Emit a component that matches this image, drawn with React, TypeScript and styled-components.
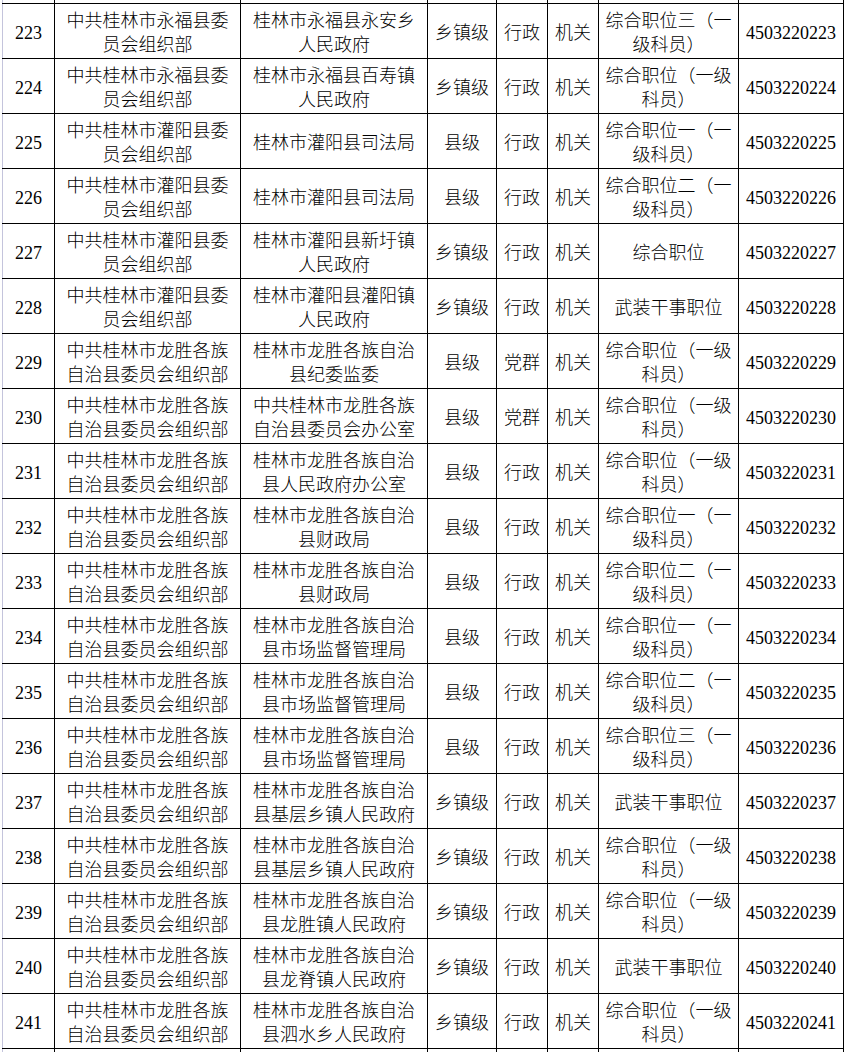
import styled, { createGlobalStyle } from "styled-components";

const GlobalStyle = createGlobalStyle`
  html, body {
    margin: 0;
    padding: 0;
    background: #ffffff;
  }
  body {
    font-family: "Liberation Serif", "Noto Sans CJK SC", serif;
    color: #000;
    overflow: hidden;
  }
`;

type Row = {
  no: string;
  org: string[];
  unit: string[];
  level: string;
  kind: string;
  nature: string;
  post: string[];
  code: string;
};

const YF = ["中共桂林市永福县委", "员会组织部"];
const GY = ["中共桂林市灌阳县委", "员会组织部"];
const LS = ["中共桂林市龙胜各族", "自治县委员会组织部"];

const POST_ZH = ["综合职位（一级", "科员）"];
const post = (n: string) => [`综合职位${n}（一`, "级科员）"];

const rows: Row[] = [
  { no: "223", org: YF, unit: ["桂林市永福县永安乡", "人民政府"], level: "乡镇级", kind: "行政", nature: "机关", post: post("三"), code: "4503220223" },
  { no: "224", org: YF, unit: ["桂林市永福县百寿镇", "人民政府"], level: "乡镇级", kind: "行政", nature: "机关", post: POST_ZH, code: "4503220224" },
  { no: "225", org: GY, unit: ["桂林市灌阳县司法局"], level: "县级", kind: "行政", nature: "机关", post: post("一"), code: "4503220225" },
  { no: "226", org: GY, unit: ["桂林市灌阳县司法局"], level: "县级", kind: "行政", nature: "机关", post: post("二"), code: "4503220226" },
  { no: "227", org: GY, unit: ["桂林市灌阳县新圩镇", "人民政府"], level: "乡镇级", kind: "行政", nature: "机关", post: ["综合职位"], code: "4503220227" },
  { no: "228", org: GY, unit: ["桂林市灌阳县灌阳镇", "人民政府"], level: "乡镇级", kind: "行政", nature: "机关", post: ["武装干事职位"], code: "4503220228" },
  { no: "229", org: LS, unit: ["桂林市龙胜各族自治", "县纪委监委"], level: "县级", kind: "党群", nature: "机关", post: POST_ZH, code: "4503220229" },
  { no: "230", org: LS, unit: ["中共桂林市龙胜各族", "自治县委员会办公室"], level: "县级", kind: "党群", nature: "机关", post: POST_ZH, code: "4503220230" },
  { no: "231", org: LS, unit: ["桂林市龙胜各族自治", "县人民政府办公室"], level: "县级", kind: "行政", nature: "机关", post: POST_ZH, code: "4503220231" },
  { no: "232", org: LS, unit: ["桂林市龙胜各族自治", "县财政局"], level: "县级", kind: "行政", nature: "机关", post: post("一"), code: "4503220232" },
  { no: "233", org: LS, unit: ["桂林市龙胜各族自治", "县财政局"], level: "县级", kind: "行政", nature: "机关", post: post("二"), code: "4503220233" },
  { no: "234", org: LS, unit: ["桂林市龙胜各族自治", "县市场监督管理局"], level: "县级", kind: "行政", nature: "机关", post: post("一"), code: "4503220234" },
  { no: "235", org: LS, unit: ["桂林市龙胜各族自治", "县市场监督管理局"], level: "县级", kind: "行政", nature: "机关", post: post("二"), code: "4503220235" },
  { no: "236", org: LS, unit: ["桂林市龙胜各族自治", "县市场监督管理局"], level: "县级", kind: "行政", nature: "机关", post: post("三"), code: "4503220236" },
  { no: "237", org: LS, unit: ["桂林市龙胜各族自治", "县基层乡镇人民政府"], level: "乡镇级", kind: "行政", nature: "机关", post: ["武装干事职位"], code: "4503220237" },
  { no: "238", org: LS, unit: ["桂林市龙胜各族自治", "县基层乡镇人民政府"], level: "乡镇级", kind: "行政", nature: "机关", post: POST_ZH, code: "4503220238" },
  { no: "239", org: LS, unit: ["桂林市龙胜各族自治", "县龙胜镇人民政府"], level: "乡镇级", kind: "行政", nature: "机关", post: POST_ZH, code: "4503220239" },
  { no: "240", org: LS, unit: ["桂林市龙胜各族自治", "县龙脊镇人民政府"], level: "乡镇级", kind: "行政", nature: "机关", post: ["武装干事职位"], code: "4503220240" },
  { no: "241", org: LS, unit: ["桂林市龙胜各族自治", "县泗水乡人民政府"], level: "乡镇级", kind: "行政", nature: "机关", post: POST_ZH, code: "4503220241" },
];

// column widths measured between grid lines
const widths = [52, 186, 187, 69, 51, 51, 140, 105];

const Sheet = styled.div`
  width: 847px;
  height: 1052px;
  overflow: hidden;
  padding-left: 2px;
  box-sizing: border-box;
`;

const Table = styled.table`
  width: 842px;
  margin-top: -52px;
  border-collapse: collapse;
  table-layout: fixed;
  border-left: 1px solid #c4c4dc;
`;

const Tr = styled.tr`
  height: 55px;
`;

const Cell = styled.td`
  border: 1px solid #000;
  padding: 4px 2px 0;
  text-align: center;
  vertical-align: middle;
  font-size: 18px;
  font-weight: 300;
  line-height: 24px;
  white-space: nowrap;
  overflow: hidden;

  &:first-child {
    border-left-color: #c4c4dc;
  }
`;

const Lines = ({ lines }: { lines: string[] }) => (
  <>
    {lines.map((l, i) => (
      <span key={i}>
        {i > 0 && <br />}
        {l}
      </span>
    ))}
  </>
);

const Blank = () => (
  <Tr>
    {widths.map((_, i) => (
      <Cell key={i} />
    ))}
  </Tr>
);

export default function App() {
  return (
    <>
      <GlobalStyle />
      <Sheet>
        <Table>
          <colgroup>
            {widths.map((w, i) => (
              <col key={i} style={{ width: w }} />
            ))}
          </colgroup>
          <tbody>
            <Blank />
            {rows.map((r) => (
              <Tr key={r.no}>
                <Cell>{r.no}</Cell>
                <Cell>
                  <Lines lines={r.org} />
                </Cell>
                <Cell>
                  <Lines lines={r.unit} />
                </Cell>
                <Cell>{r.level}</Cell>
                <Cell>{r.kind}</Cell>
                <Cell>{r.nature}</Cell>
                <Cell>
                  <Lines lines={r.post} />
                </Cell>
                <Cell>{r.code}</Cell>
              </Tr>
            ))}
            <Blank />
          </tbody>
        </Table>
      </Sheet>
    </>
  );
}
